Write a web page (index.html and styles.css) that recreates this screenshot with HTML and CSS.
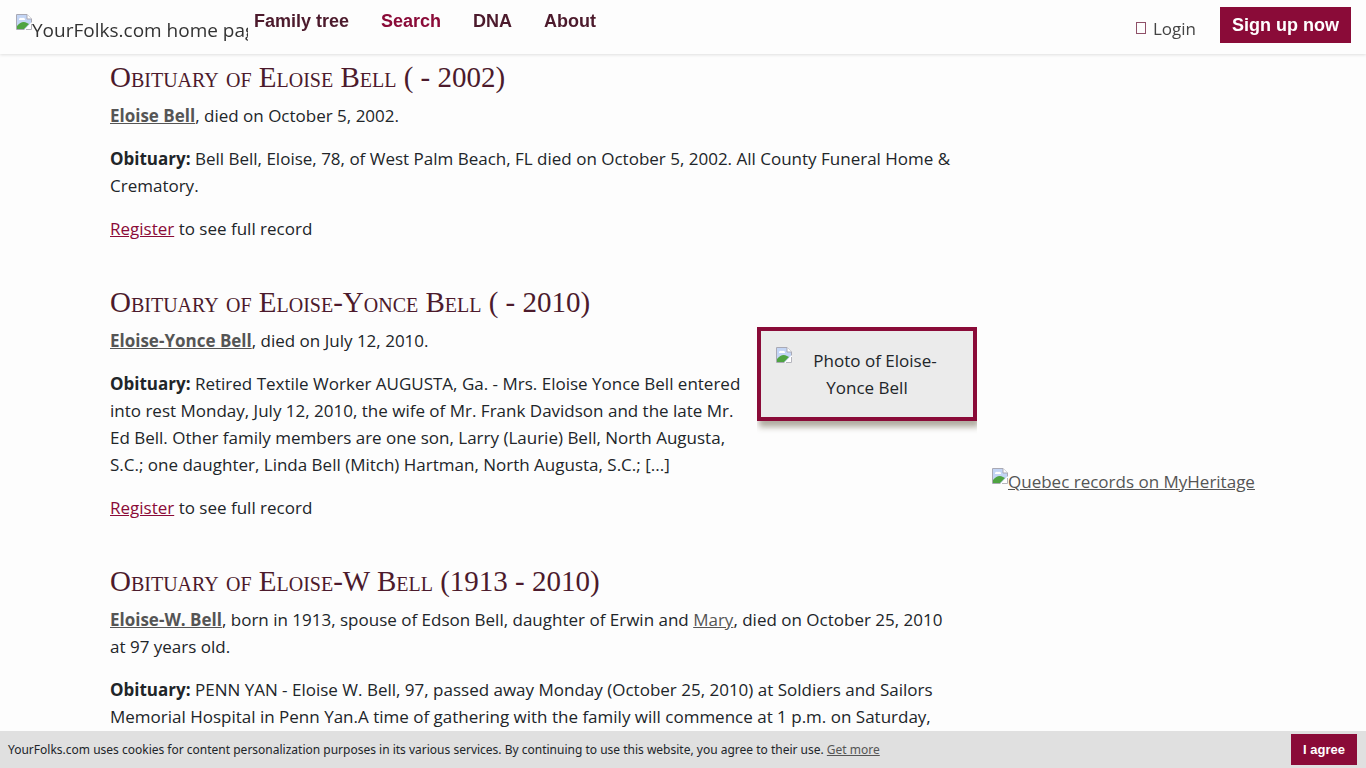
FILE: index.html
```html
<!DOCTYPE html>
<html lang="en">

<head>
    <meta charset="UTF-8">
    <meta name="viewport" content="width=device-width, initial-scale=1.0">
    <title>Eloise Bell obituaries - YourFolks.com</title>
    <link rel="stylesheet" href="styles.css">
</head>

<body>

    <!-- icon shown in place of pictures -->
    <svg class="defs" width="0" height="0" aria-hidden="true">
        <symbol id="picture" viewBox="0 0 16 16">
            <path d="M.5 .5H11L15.500 5V15.500H.5Z" fill="#fff" stroke="#a9a9b4" />
            <path d="M1 1H11V5H15V9L10 15H1Z" fill="#c3d5f5" />
            <path d="M3 6a2 2 0 0 1 3-2 2 2 0 0 1 3 2Z" fill="#fff" />
            <path d="M1 15V12Q6 6 11 9L13 10L8 15Z" fill="#4fa442" />
            <path d="M8 16L16 8V16Z" fill="#fff" />
            <path d="M11 .5V5H15.500" fill="#fff" stroke="#a9a9b4" />
            <path d="M10 15.500H15.500V10" fill="none" stroke="#b5b5bd" />
        </symbol>
    </svg>

    <header class="topbar">
        <a class="logo" href="#"><svg class="picture"><use href="#picture" /></svg>YourFolks.com home page</a>
        <nav>
            <ul>
                <li><a href="#">Family tree</a></li>
                <li><a class="active" href="#">Search</a></li>
                <li><a href="#">DNA</a></li>
                <li><a href="#">About</a></li>
            </ul>
        </nav>
        <div class="account">
            <a class="login" href="#"><span class="login-icon"></span>Login</a>
            <button class="btn" type="button">Sign up now</button>
        </div>
    </header>

    <div class="container">
        <main>
            <article class="record">
                <h2>Obituary of Eloise Bell ( - 2002)</h2>
                <p><a class="name" href="#">Eloise Bell</a>, died on October 5, 2002.</p>
                <p><strong>Obituary:</strong> Bell Bell, Eloise, 78, of West Palm Beach, FL died on October 5, 2002. All County Funeral Home &amp; Crematory.</p>
                <p><a class="register" href="#">Register</a> to see full record</p>
            </article>

            <article class="record">
                <h2>Obituary of Eloise-Yonce Bell ( - 2010)</h2>
                <div class="photo"><svg class="picture"><use href="#picture" /></svg>Photo of Eloise-Yonce Bell</div>
                <p><a class="name" href="#">Eloise-Yonce Bell</a>, died on July 12, 2010.</p>
                <p><strong>Obituary:</strong> Retired Textile Worker AUGUSTA, Ga. - Mrs. Eloise Yonce Bell entered into rest Monday, July 12, 2010, the wife of Mr. Frank Davidson and the late Mr. Ed Bell. Other family members are one son, Larry (Laurie) Bell, North Augusta, S.C.; one daughter, Linda Bell (Mitch) Hartman, North Augusta, S.C.; [...]</p>
                <p><a class="register" href="#">Register</a> to see full record</p>
            </article>

            <article class="record">
                <h2>Obituary of Eloise-W Bell (1913 - 2010)</h2>
                <p><a class="name" href="#">Eloise-W. Bell</a>, born in 1913, spouse of Edson Bell, daughter of Erwin and <a href="#">Mary</a>, died on October 25, 2010 at 97 years old.</p>
                <p><strong>Obituary:</strong> PENN YAN - Eloise W. Bell, 97, passed away Monday (October 25, 2010) at Soldiers and Sailors Memorial Hospital in Penn Yan.A time of gathering with the family will commence at 1 p.m. on Saturday,</p>
            </article>
        </main>

        <aside>
            <a href="#"><svg class="picture"><use href="#picture" /></svg>Quebec records on MyHeritage</a>
        </aside>
    </div>

    <div class="cookies">
        <p>YourFolks.com uses cookies for content personalization purposes in its various services. By continuing to use this website, you agree to their use. <a href="#">Get more</a></p>
        <button class="btn btn-small" type="button">I agree</button>
    </div>

</body>

</html>
```
FILE: styles.css
```css
* {
    box-sizing: border-box;
}

body {
    margin: 0;
    padding: 60px 0 38px;
    background-color: #fdfdfd;
    color: #212529;
    font-family: "Segoe UI", "Open Sans", sans-serif;
    font-size: 17px;
    line-height: 27px;
}

a {
    color: #555;
}

p {
    margin: 0 0 16px;
}

.defs {
    position: absolute;
}

.picture {
    width: 16px;
    height: 16px;
}

/* Header */
.topbar {
    position: fixed;
    top: 0;
    left: 0;
    right: 0;
    z-index: 10;
    display: flex;
    align-items: flex-start;
    height: 54px;
    padding: 7px 15px 0 16px;
    background-color: #fdfdfd;
    box-shadow: 0 1px 3px rgba(0, 0, 0, 0.12);
}

.logo {
    display: flex;
    width: 232px;
    padding-top: 7px;
    overflow: hidden;
    color: #333;
    font-size: 19px;
    line-height: 32px;
    text-decoration: none;
    white-space: nowrap;
}

.logo .picture {
    flex-shrink: 0;
}

nav ul {
    display: flex;
    gap: 32px;
    margin: 0;
    padding: 0 0 0 6px;
    list-style-type: none;
}

nav a {
    color: #4c1a2c;
    font-family: Arial, "Liberation Sans", sans-serif;
    font-size: 18px;
    font-weight: bold;
    text-decoration: none;
}

nav a.active {
    color: #8a0b38;
}

.account {
    display: flex;
    align-items: center;
    gap: 24px;
    margin-left: auto;
}

.login {
    display: flex;
    align-items: center;
    gap: 7px;
    padding-top: 6px;
    color: #444;
    text-decoration: none;
}

.login-icon {
    width: 10px;
    height: 12px;
    border: 1px solid #8f5068;
}

.btn {
    height: 36px;
    padding: 0 12px;
    border: none;
    background-color: #8a0b38;
    color: #fff;
    font-family: Arial, "Liberation Sans", sans-serif;
    font-size: 18px;
    font-weight: bold;
    cursor: pointer;
}

.btn-small {
    height: 31px;
    font-size: 13px;
}

/* Content */
.container {
    display: grid;
    grid-template-columns: 3fr 1fr;
    max-width: 1176px;
    margin: 0 auto;
}

main {
    padding: 0 15px;
}

h2 {
    margin: 0 0 8px;
    color: #4c1a2c;
    font-family: "Times New Roman", "Liberation Serif", serif;
    font-size: 29px;
    font-variant: small-caps;
    font-weight: normal;
    line-height: 34px;
}

.record {
    margin-bottom: 43px;
}

.record:last-child,
.record:last-child p:last-child {
    margin-bottom: 0;
}

.name {
    font-weight: bold;
}

.register {
    color: #8a0b38;
}

.photo {
    float: right;
    width: 220px;
    margin: 0 -15px 15px 15px;
    padding: 16px 15px;
    border: 4px solid #8a0b38;
    background-color: #ebebeb;
    box-shadow: 2px 6px 6px rgba(60, 50, 20, 0.4);
    clip-path: inset(0 0 -15px 0);
    text-align: center;
}

.photo .picture {
    float: left;
}

aside {
    padding: 408px 15px 0;
    white-space: nowrap;
}

aside .picture {
    vertical-align: -2px;
    margin-bottom: 6px;
}

/* Cookie notice */
.cookies {
    position: fixed;
    bottom: 0;
    left: 0;
    right: 0;
    z-index: 10;
    display: flex;
    align-items: center;
    justify-content: space-between;
    padding: 3px 9px 3px 8px;
    background-color: #e0e0e0;
    font-family: "Segoe UI", "Noto Sans", sans-serif;
    font-size: 12px;
    line-height: 20px;
}

.cookies p {
    margin: 0;
}
```
